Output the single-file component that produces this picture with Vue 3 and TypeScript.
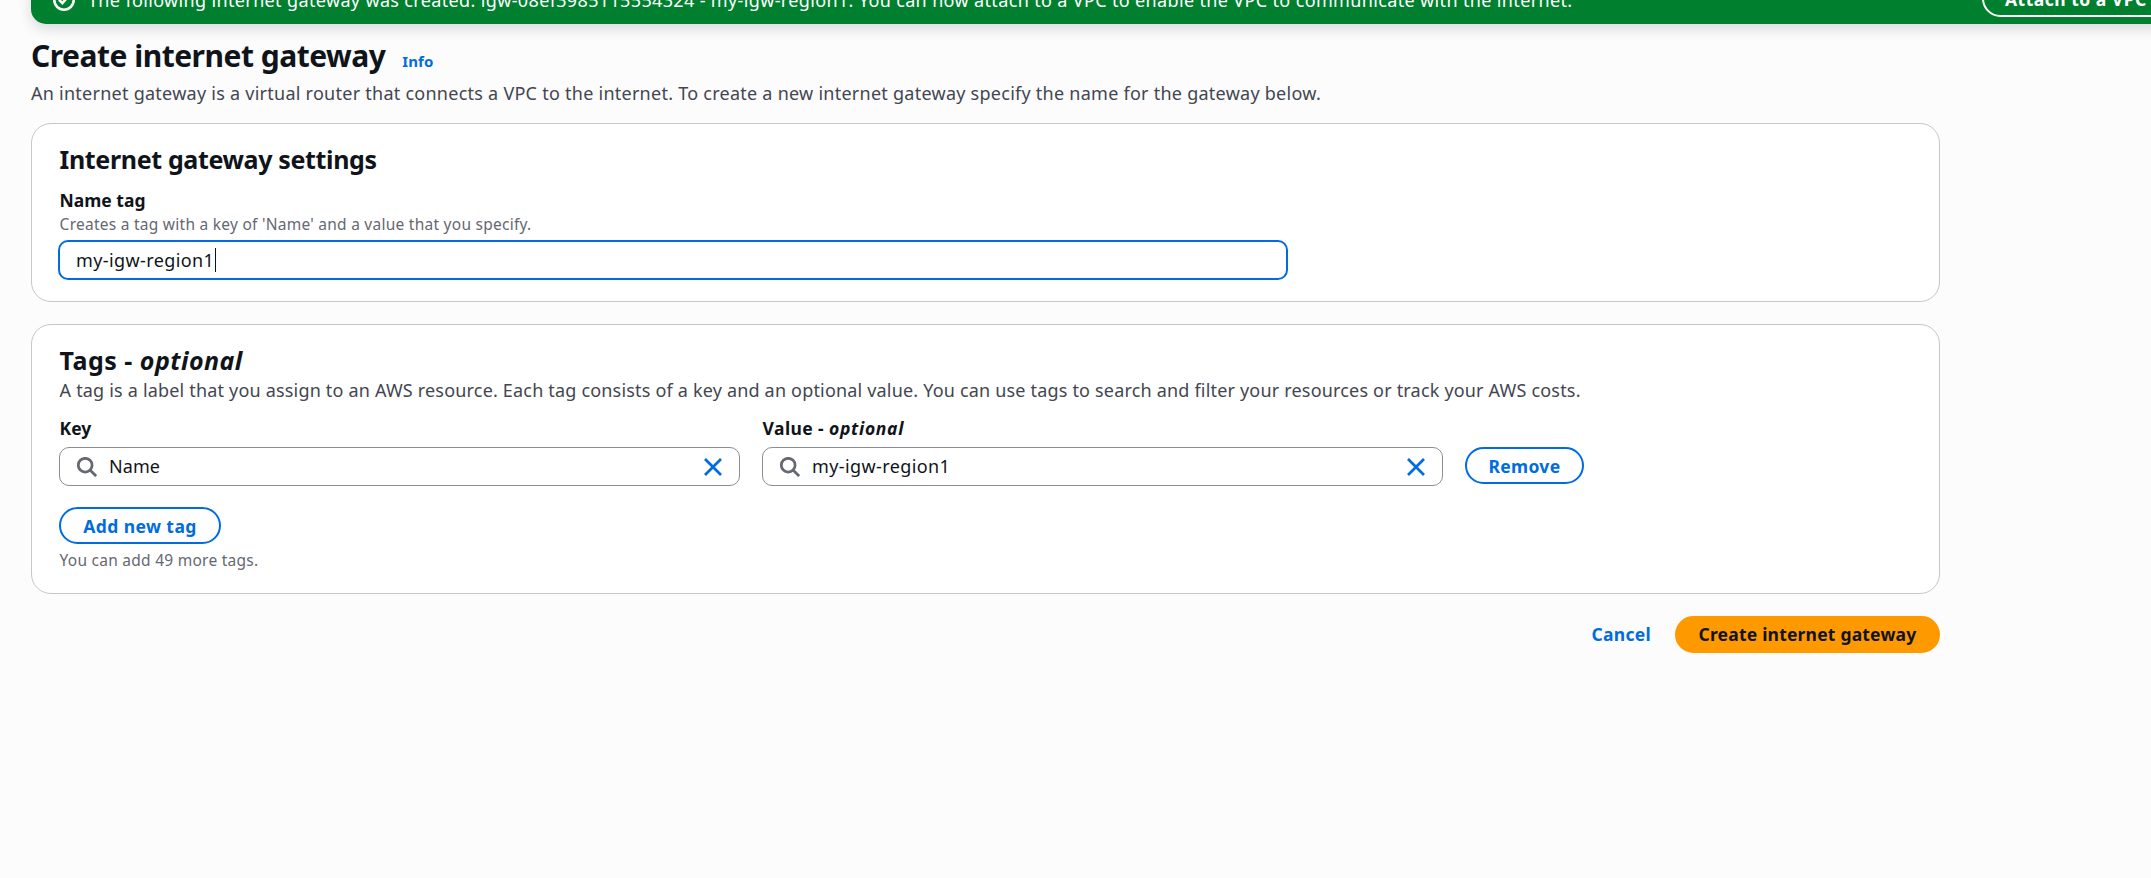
<script setup lang="ts">
import { ref } from 'vue'

interface TagField {
  id: string
  label: string
  optional: boolean
  value: string
}

const nameTag = ref('my-igw-region1')
const fields = ref<TagField[]>([
  { id: 'key', label: 'Key', optional: false, value: 'Name' },
  { id: 'value', label: 'Value -', optional: true, value: 'my-igw-region1' },
])
</script>

<template>
  <div class="page">
    <div class="banner">
      <svg class="banner-icon" viewBox="0 0 22 22" fill="none" stroke="#fff" stroke-width="2.6">
        <circle cx="11" cy="11" r="9.7" />
        <path d="M6 10.8l3.4 3.3 5.4-6.1" />
      </svg>
      <span class="banner-text">The following internet gateway was created: igw-08ef3985115554324 - my-igw-region1. You can now attach to a VPC to enable the VPC to communicate with the internet.</span>
      <button class="btn banner-btn">Attach to a VPC</button>
    </div>

    <main class="content">
      <header class="title-row">
        <h1>Create internet gateway</h1>
        <a class="info">Info</a>
      </header>
      <p class="desc intro">An internet gateway is a virtual router that connects a VPC to the internet. To create a new internet gateway specify the name for the gateway below.</p>

      <section class="panel settings">
        <h2>Internet gateway settings</h2>
        <div class="label name-label">Name tag</div>
        <div class="hint">Creates a tag with a key of 'Name' and a value that you specify.</div>
        <div class="input focused"><span class="value">{{ nameTag }}</span><i class="caret"></i></div>
      </section>

      <section class="panel tags">
        <h2>Tags - <em>optional</em></h2>
        <p class="desc tags-desc">A tag is a label that you assign to an AWS resource. Each tag consists of a key and an optional value. You can use tags to search and filter your resources or track your AWS costs.</p>
        <div class="tag-row">
          <div v-for="f in fields" :key="f.id" class="field">
            <div class="label">{{ f.label }} <em v-if="f.optional">optional</em></div>
            <div class="input search">
              <svg class="glass" viewBox="0 0 20 20" fill="none" stroke="#656871" stroke-width="2.7">
                <circle cx="8.2" cy="8.2" r="6.9" />
                <path d="M13 13l6.1 6.1" />
              </svg>
              <span class="value" :class="f.id">{{ f.value }}</span>
              <svg class="clear" viewBox="0 0 18 18" fill="none" stroke="#006ce0" stroke-width="2.7">
                <path d="M1 1l16 16M17 1L1 17" />
              </svg>
            </div>
          </div>
          <button class="btn remove">Remove</button>
        </div>
        <button class="btn add">Add new tag</button>
        <div class="hint more">You can add 49 more tags.</div>
      </section>

      <footer class="actions">
        <a class="cancel">Cancel</a>
        <button class="btn primary">Create internet gateway</button>
      </footer>
    </main>
  </div>
</template>

<style>
body {
  margin: 0;
  background: #fcfcfd;
}
</style>

<style scoped>
.page {
  width: 100%;
  height: 878px;
  overflow: hidden;
  box-sizing: border-box;
  padding-left: 31px;
  background: #fcfcfd;
  color: #0f141a;
  font-family: "Noto Sans", "Open Sans", sans-serif;
  font-size: 18px;
  line-height: 25px;
}
h1, h2, p {
  margin: 0;
}
.banner {
  display: flex;
  align-items: flex-start;
  box-sizing: border-box;
  width: 2190px;
  height: 60px;
  margin-top: -36px;
  padding-left: 22px;
  border-radius: 15px;
  background: #00802f;
  color: #fff;
  box-shadow: 0 5px 14px rgba(0, 7, 22, 0.14);
}
.banner-icon {
  flex: none;
  width: 22px;
  height: 22px;
  margin-top: 25px;
}
.banner-text {
  width: 1894px;
  flex: none;
  margin: 24px 0 0 13px;
  letter-spacing: 0.355px;
  white-space: nowrap;
}
.btn {
  box-sizing: border-box;
  height: 37px;
  padding: 0;
  border: 2px solid #006ce0;
  border-radius: 25px;
  background: #fff;
  color: #006ce0;
  font: 700 17.5px/25px "Noto Sans", "Open Sans", sans-serif;
  white-space: nowrap;
}
.btn.banner-btn {
  flex: none;
  width: 190px;
  margin-top: 16px;
  border-color: #fff;
  background: transparent;
  color: #fff;
  letter-spacing: 0.5px;
  padding: 1px 0 0 21px;
  text-align: left;
}
.content {
  width: 1909px;
}
.title-row {
  display: flex;
  align-items: baseline;
  gap: 17px;
  padding-top: 13px;
  height: 37px;
}
h1 {
  font-size: 30px;
  line-height: 37px;
  font-weight: 700;
  letter-spacing: -0.5px;
}
.info {
  color: #006ce0;
  font-size: 15px;
  font-weight: 700;
  letter-spacing: 0.1px;
}
.desc {
  color: #424650;
  white-space: nowrap;
}
.intro {
  margin-top: 7px;
  letter-spacing: 0.256px;
}
.panel {
  box-sizing: border-box;
  border: 1px solid #c6c6cd;
  border-radius: 20px;
  background: #fff;
  padding: 20px 27px 0;
}
.settings {
  height: 179px;
  margin-top: 17px;
}
.tags {
  height: 270px;
  margin-top: 22px;
}
h2 {
  font-size: 25px;
  line-height: 31px;
  font-weight: 700;
  letter-spacing: -0.35px;
}
.tags h2 {
  letter-spacing: 0.5px;
}
.tags h2 em {
  letter-spacing: 0.45px;
}
.label {
  font-size: 17.5px;
  font-weight: 700;
}
.name-label {
  margin-top: 13px;
}
.hint {
  color: #656871;
  font-size: 15.5px;
  line-height: 20px;
  letter-spacing: 0.255px;
  margin-top: 1px;
}
.input {
  display: flex;
  align-items: center;
  box-sizing: border-box;
  background: #fff;
  border: 1px solid #8c8c94;
  border-radius: 10px;
  height: 39px;
}
.value {
  letter-spacing: 0.4px;
}
.value.key {
  letter-spacing: 0.05px;
}
.focused {
  width: 1230px;
  height: 40px;
  margin: 6px 0 0 -1px;
  padding-left: 16px;
  border: 2px solid #006ce0;
}
.caret {
  width: 1px;
  height: 24px;
  background: #0f141a;
  margin-left: 1px;
}
.tags-desc {
  margin-top: 2px;
  letter-spacing: 0.185px;
}
.tag-row {
  display: flex;
  align-items: flex-end;
  gap: 22px;
  margin-top: 13px;
}
.field {
  width: 681px;
}
.field + .field .label {
  letter-spacing: 0.4px;
}
.field + .field .label em {
  letter-spacing: 0.7px;
}
.search {
  margin-top: 6px;
  padding: 0 17px;
}
.glass {
  width: 20px;
  height: 20px;
  flex: none;
  margin-right: 12px;
}
.clear {
  width: 18px;
  height: 18px;
  flex: none;
  margin-left: auto;
}
.btn.remove {
  width: 119px;
  margin-bottom: 2px;
  padding-top: 1px;
  letter-spacing: 0.3px;
}
.btn.add {
  display: block;
  width: 162px;
  margin-top: 21px;
  padding-top: 1px;
  letter-spacing: 0.42px;
}
.more {
  margin-top: 6px;
}
.actions {
  display: flex;
  justify-content: flex-end;
  align-items: center;
  gap: 24px;
  margin-top: 22px;
}
.cancel {
  color: #006ce0;
  font-size: 17.5px;
  font-weight: 700;
  letter-spacing: 0.3px;
}
.btn.primary {
  width: 265px;
  border-color: #ff9900;
  background: #ff9900;
  color: #0f141a;
  letter-spacing: 0.2px;
}
.settings h2, .tags h2, .desc.tags-desc, .hint, .label {
  text-indent: 0.6px;
}
</style>
